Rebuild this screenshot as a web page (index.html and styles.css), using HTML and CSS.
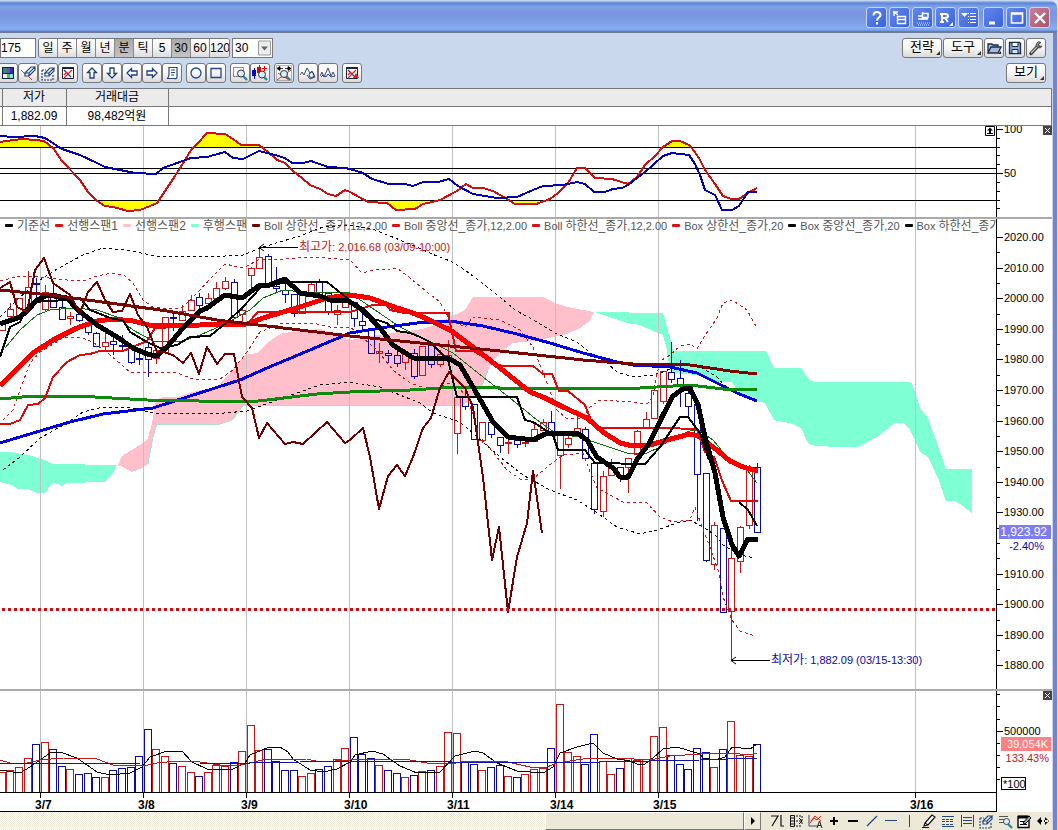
FILE: index.html
```html
<!DOCTYPE html>
<html lang="ko">
<head>
    <meta charset="UTF-8">
    <meta name="viewport" content="width=device-width, initial-scale=1.0">
    <title>종합차트</title>
    <link rel="stylesheet" href="styles.css">
</head>
<body>
    <!-- shared icons -->
    <svg class="defs" aria-hidden="true">
        <symbol id="i-eraser" viewBox="0 0 16 16">
            <path d="M5 8l6-6h4l-6 6zM5 8v3h4l6-6V2M9 8v3" fill="#fff" stroke="#26487f" stroke-width="1.2"/>
        </symbol>
        <symbol id="i-erasebox" viewBox="0 0 16 16">
            <path d="M2 5v10h11V9M2 5h4" fill="none" stroke="#26487f" stroke-width="1.2" stroke-dasharray="2 1"/>
            <path d="M5 8l5-5h4l-5 5zM5 8v3h4l5-5V3M9 8v3" fill="#fff" stroke="#26487f" stroke-width="1.2"/>
        </symbol>
        <symbol id="i-chartx" viewBox="0 0 16 16">
            <path d="M2.500 2.500h11v11h-11z" fill="#fff" stroke="#223" />
            <path d="M2 3h12" stroke="#223" stroke-width="2"/>
            <path d="M4 5l7 7" stroke="#23a" stroke-width="1.200"/>
            <path d="M12 5l-8 8M4 10l3-3" stroke="#d22" stroke-width="1.200"/>
        </symbol>
        <symbol id="i-arrow" viewBox="0 0 16 16">
            <path d="M8 3l4.500 4.500H10V13H6V7.500H3.500z" fill="#fff" stroke="#1f3f7f" stroke-width="1.300"/>
        </symbol>
        <symbol id="i-close" viewBox="0 0 9 9">
            <path d="M0 0h9v9H0z" fill="#444"/>
            <path d="M2 2l5 5M7 2L2 7" stroke="#fff"/>
        </symbol>
    </svg>

    <div class="window">
        <header class="titlebar">
            <div class="title-buttons">
                <button aria-label="도움말"><svg viewBox="0 0 16 16"><path d="M4.500 5.500C4.500 1 11.500 1 11.500 5c0 2.500-3.500 2.500-3.500 5.500M8 12v2.500" fill="none" stroke="#fff" stroke-width="2"/></svg></button>
                <button aria-label="창 연결"><svg viewBox="0 0 16 16"><path d="M5.500 6.500h8v7h-8zM6 9.500h7M2 2l4 3M1 2h5M2 1v5" fill="none" stroke="#fff" stroke-width="1.400"/></svg></button>
                <button aria-label="창 고정"><svg viewBox="0 0 16 16"><path d="M3 6h4M7.500 2v8M8 3.500h5v4H8M3 9h10" fill="none" stroke="#fff" stroke-width="1.500"/><path d="M2 13h13M3 15h12" stroke="#dfe8ff" stroke-dasharray="1 1"/></svg></button>
                <button aria-label="복원"><svg viewBox="0 0 16 16"><path d="M4 12V4h3c4 0 4 4 0 4H4M7 8l3 4M2 4h3M2 12h4" fill="none" stroke="#fff" stroke-width="2"/><path d="M15 12v4h-4z" fill="#fff"/></svg></button>
                <button aria-label="메뉴"><svg viewBox="0 0 16 16"><path d="M0 3h7l-3.500 4z" fill="#fff"/><path d="M7 3.500h8M7 6.500h8M7 9.500h8M7 12.500h8" stroke="#fff" stroke-dasharray="1 1 8 1"/></svg></button>
            </div>
            <div class="title-buttons">
                <button class="sys" aria-label="최소화"><svg viewBox="0 0 16 16"><path d="M3 13h6" stroke="#fff" stroke-width="3"/></svg></button>
                <button class="sys" aria-label="최대화"><svg viewBox="0 0 16 16"><path d="M2.500 3h11v10h-11zM2 4h12" fill="none" stroke="#fff" stroke-width="1.600"/></svg></button>
                <button class="sys close" aria-label="닫기"><svg viewBox="0 0 16 16"><path d="M3 3l10 10M13 3L3 13" stroke="#fff" stroke-width="2.400"/></svg></button>
            </div>
        </header>

        <div class="body">
            <div class="toolbar">
                <div class="row">
                    <input class="field code" type="text" value="175" aria-label="종목 코드">
                    <div class="periods">
                        <button>일</button><button>주</button><button>월</button><button>년</button><button class="on">분</button><button>틱</button><button>5</button><button class="on">30</button><button>60</button><button>120</button>
                    </div>
                    <div class="combo">
                        <select class="field" aria-label="분 간격"><option>30</option><option>60</option></select>
                        <svg class="combo-arrow" viewBox="0 0 13 15"><path d="M.5.5h12v14H.5z" fill="#ececec" stroke="#999"/><path d="M3 6h7l-3.500 4z" fill="#666"/></svg>
                    </div>
                    <div class="right">
                        <button class="btn text menu">전략</button>
                        <button class="btn text menu">도구</button>
                        <button class="btn" aria-label="열기"><svg viewBox="0 0 16 16"><path d="M2 13V4h4l1 1h5v2M2 13l3-6h10l-3 6z" fill="#a8bbdc" stroke="#1c2c4c" stroke-width="1.300"/><path d="M15 11v3h-3z" fill="#222"/></svg></button>
                        <button class="btn" aria-label="저장"><svg viewBox="0 0 16 16"><path d="M2.500 2.500h10l1 1v10h-11z" fill="#8fa8d8" stroke="#1c2c4c" stroke-width="1.300"/><path d="M5 2.500h6v4H5z" fill="#fff" stroke="#1c2c4c"/><path d="M5 9.500h6v4H5z" fill="#dde5f5" stroke="#1c2c4c"/></svg></button>
                        <button class="btn" aria-label="설정"><svg viewBox="0 0 16 16"><path d="M3 13.500L10 6" stroke="#444" stroke-width="3.500" stroke-linecap="round"/><path d="M3 13L9 7" stroke="#bbb" stroke-width="1.200"/><path d="M13 2.500a3 3 0 1 0 1 3.500l-3 .5-.5-2.500z" fill="#999" stroke="#444"/></svg></button>
                    </div>
                </div>

                <div class="row icons">
                    <div class="group cut">
                        <button class="btn" aria-label="색상"><svg viewBox="0 0 16 16"><path d="M2 2h12v12H2z" fill="#123"/><path d="M3 3h4v5H3z" fill="#2a8a8a"/><path d="M7 3h3v5H7z" fill="#a04080"/><path d="M10 3h3v5h-3z" fill="#2038c0"/><path d="M3 9h4v4H3z" fill="#eee"/><path d="M7 9h3v4H7z" fill="#50c050"/><path d="M10 9h3v4h-3z" fill="#90e0f0"/></svg></button>
                        <button class="btn" aria-label="지우개"><svg viewBox="0 0 16 16"><path d="M1 5l4 4M8 11l4 4" fill="none" stroke="#d33"/><use href="#i-eraser"/></svg></button>
                        <button class="btn" aria-label="영역 지우기"><svg><use href="#i-erasebox"/></svg></button>
                        <button class="btn" aria-label="차트 초기화"><svg><use href="#i-chartx"/></svg></button>
                    </div>
                    <div class="group">
                        <button class="btn" aria-label="위"><svg><use href="#i-arrow"/></svg></button>
                        <button class="btn" aria-label="아래"><svg class="down"><use href="#i-arrow"/></svg></button>
                        <button class="btn" aria-label="왼쪽"><svg class="left"><use href="#i-arrow"/></svg></button>
                        <button class="btn" aria-label="오른쪽"><svg class="rightward"><use href="#i-arrow"/></svg></button>
                        <button class="btn" aria-label="메모"><svg viewBox="0 0 16 16"><path d="M5 2.500h8v9c0 3-2 2-3 2H3c2-1 2-2 2-4z" fill="#fff" stroke="#26487f" stroke-width="1.200"/><path d="M7 5h4M7 7.500h4M7 10h3" stroke="#26487f"/></svg></button>
                    </div>
                    <div class="group">
                        <button class="btn" aria-label="원"><svg viewBox="0 0 16 16"><circle cx="8" cy="8" r="5" fill="none" stroke="#26487f" stroke-width="1.300"/></svg></button>
                        <button class="btn" aria-label="사각형"><svg viewBox="0 0 16 16"><path d="M3 3.500h10v9H3z" fill="none" stroke="#26487f" stroke-width="1.300"/></svg></button>
                    </div>
                    <div class="group">
                        <button class="btn" aria-label="영역 확대"><svg viewBox="0 0 16 16"><path d="M1.500 2.500h10v9h-10z" fill="none" stroke="#222" stroke-dasharray="1 1"/><path d="M11 11l4 4" stroke="#2a8a9a" stroke-width="2.400"/><circle cx="9" cy="8.500" r="3.500" fill="#d8eef8" stroke="#333"/></svg></button>
                        <button class="btn" aria-label="봉 확대"><svg viewBox="0 0 16 16"><path d="M0 5h4v6H0zM2 3h1v11H2z" fill="#0000c8"/><path d="M5 2h4v6H5zM7 0h1v10H7zM12 1h1v5h-1zM10 3h5v1h-5z" fill="#d00"/><path d="M12 12l3 3" stroke="#2a8a9a" stroke-width="2.400"/><circle cx="10" cy="9.500" r="3.500" fill="#d8eef8" stroke="#333"/></svg></button>
                    </div>
                    <div class="group">
                        <button class="btn" aria-label="전체 보기"><svg viewBox="0 0 16 16"><path d="M.5.5h15v15H.500z" fill="none" stroke="#777" stroke-dasharray="1 1"/><path d="M1 15L15 5M2 8l11 7" stroke="#d33"/><path d="M3 3.500h4M9 3.500h4M4 1.500v4l-3-2zM12 1.500v4l3-2z" fill="#000" stroke="#000" stroke-width=".8"/><path d="M10 11l4 4" stroke="#2a8a9a" stroke-width="2.400"/><circle cx="8" cy="9" r="3.500" fill="#d8eef8" stroke="#333"/></svg></button>
                    </div>
                    <div class="group">
                        <button class="btn" aria-label="추세 보기"><svg viewBox="0 0 16 16"><path d="M0 10l2-3 2 3 3-7 3 5 2-2 3 6-5 2-3-4" fill="none" stroke="#3a4a6a"/><circle cx="11.500" cy="10" r="2.500" fill="none" stroke="#26487f"/></svg></button>
                        <button class="btn" aria-label="파동 보기"><svg viewBox="0 0 16 16"><path d="M0 11l2-4 2 5 4-9 3 8 2-4 2 4" fill="none" stroke="#3a4a6a"/><path d="M1 12l2-2 3 2 2-3 3 3 4-1" fill="none" stroke="#26487f"/></svg></button>
                    </div>
                    <div class="group">
                        <button class="btn" aria-label="신호 삭제"><svg viewBox="0 0 16 16"><use href="#i-chartx"/><path d="M9 13l3-5 3 5z" fill="#d22"/></svg></button>
                    </div>
                    <div class="right">
                        <button class="btn text menu">보기</button>
                    </div>
                </div>
            </div>

            <table class="quote">
                <tr><th class="edge"></th><th class="low">저가</th><th class="amount">거래대금</th><th></th></tr>
                <tr><td></td><td>1,882.09</td><td>98,482억원</td><td></td></tr>
            </table>

            <main class="chart">
                <section class="pane oscillator">
                    <svg class="plot" id="oscPlot"></svg>
                    <svg class="axis" id="oscAxis"></svg>
                    <button class="mini expand" aria-label="확대"><svg viewBox="0 0 10 10"><path d="M.5.500h9v9h-9z" fill="#fff" stroke="#000"/><path d="M5 1.500l3 3H6V7h2v1H2V7h2V4.500H2z"/></svg></button>
                    <button class="mini" aria-label="지표 닫기"><svg><use href="#i-close"/></svg></button>
                </section>

                <section class="pane price">
                    <svg class="plot" id="pricePlot"></svg>
                    <svg class="axis" id="priceAxis"></svg>
                    <ul class="legend">
                        <li class="black"><span>기준선</span></li>
                        <li class="red"><span>선행스팬1</span></li>
                        <li class="pink"><span>선행스팬2</span></li>
                        <li class="mint"><span>후행스팬</span></li>
                        <li class="maroon"><small>Boll </small>상한선_종가<small>,12,2.00</small></li>
                        <li class="red"><small>Boll </small>중앙선_종가<small>,12,2.00</small></li>
                        <li class="red"><small>Boll </small>하한선_종가<small>,12,2.00</small></li>
                        <li class="red"><small>Box </small>상한선_종가<small>,20</small></li>
                        <li class="black"><small>Box </small>중앙선_종가<small>,20</small></li>
                        <li class="black"><small>Box </small>하한선_종가</li>
                    </ul>
                </section>

                <section class="pane volume">
                    <svg class="plot" id="volPlot"></svg>
                    <svg class="axis" id="volAxis"></svg>
                    <button class="mini" aria-label="거래량 닫기"><svg><use href="#i-close"/></svg></button>
                </section>
            </main>

            <footer class="bottom">
                <div class="scrollbar">
                    <div class="thumb"></div>
                    <button aria-label="오른쪽으로"><svg viewBox="0 0 8 8"><path d="M2 0l4 4-4 4z"/></svg></button>
                </div>
                <div class="draw-tools">
                    <button aria-label="되돌리기"><svg viewBox="0 0 16 16"><path d="M2 3h7L3 13M12 2v11h3" fill="none" stroke="#111" stroke-width="1.200"/></svg></button>
                    <button aria-label="기간"><svg viewBox="0 0 16 16"><path d="M2.500 2.500h4v11h-4zM2 5h4M2 8h4M2 11h4" fill="none" stroke="#111"/><path d="M8 3h6M8 8h5M8 13h6M14 3v8" stroke="#111" stroke-dasharray="2 1"/><path d="M11 5l3 3-3 3" fill="none" stroke="#111"/></svg></button>
                    <button aria-label="자동"><svg viewBox="0 0 16 16"><path d="M2 2v11h8" fill="none" stroke="#334a7a"/><path d="M3 10l4-5 3 2 4-4M4 8l4-5 6 5" fill="none" stroke="#d22"/><path d="M10 15l2.500-7 2.500 7M11 12.500h3" fill="none" stroke="#222"/></svg></button>
                    <button aria-label="늘리기"><svg viewBox="0 0 16 16"><path d="M8 4v8M4 8h8" stroke="#000" stroke-width="2"/></svg></button>
                    <button aria-label="줄이기"><svg viewBox="0 0 16 16"><path d="M3 8h10" stroke="#000" stroke-width="2"/></svg></button>
                    <button aria-label="추세선"><svg viewBox="0 0 16 16"><path d="M3 13L13 3" stroke="#26487f" stroke-width="1.200"/></svg></button>
                    <button aria-label="수평선"><svg viewBox="0 0 16 16"><path d="M2 7.500h12" stroke="#26487f"/></svg></button>
                    <button aria-label="수직선"><svg viewBox="0 0 16 16"><path d="M7.500 2v12" stroke="#26487f"/></svg></button>
                    <button aria-label="펜"><svg viewBox="0 0 16 16"><path d="M4 10l7-8 3 2-7 8-4 1zM4 10l3 2M1 14.500h7" fill="#fff" stroke="#111" stroke-width="1.200"/></svg></button>
                    <button aria-label="격자"><svg viewBox="0 0 16 16"><path d="M2 3.500h12M2 13.500h12" stroke="#26487f"/><path d="M2 6.500h12M2 8.500h12M2 11.500h12" stroke="#26487f" stroke-dasharray="3 1"/></svg></button>
                    <button aria-label="채널"><svg viewBox="0 0 16 16"><path d="M2.500 2v12M14.500 2v12M4 4.500h9M4 7.500h9M4 10.500h9" stroke="#26487f"/></svg></button>
                    <button aria-label="지우기"><svg><use href="#i-erasebox"/></svg></button>
                    <button aria-label="찾기"><svg viewBox="0 0 16 16"><path d="M2 3.500h9M2 6.500h6M2 9.500h5" stroke="#555"/><path d="M11 11l4 4" stroke="#2a8a9a" stroke-width="2.400"/><circle cx="9.500" cy="8.500" r="3" fill="#d8eef8" stroke="#345"/></svg></button>
                    <button aria-label="메모"><svg viewBox="0 0 16 16"><path d="M2 3.500h11v11H2z" fill="#fff" stroke="#000" stroke-width="1.400"/><path d="M2 4h10" stroke="#000" stroke-width="3"/><path d="M4 8.500h6M4 11.500h7" stroke="#000"/><path d="M7 10l6-7 2 2-6 6z" fill="#9ab" stroke="#000"/></svg></button>
                    <button aria-label="좌우 이동"><svg viewBox="0 0 16 16"><path d="M6 4v8L2 8zM10 4v8l4-4zM4 7h3v2H4zM9 7h4v2H9z"/></svg></button>
                </div>
            </footer>
        </div>
    </div>
    <script src="chart.js"></script>
</body>
</html>
```
FILE: styles.css
```css
* {
    box-sizing: border-box;
}

body {
    margin: 0;
    background: #dde2f4;
    font-family: "Liberation Sans", "Noto Sans CJK KR", sans-serif;
    font-size: 12px;
    color: #000;
}

button, input, select {
    font: inherit;
    color: inherit;
    margin: 0;
    padding: 0;
}

button svg {
    display: block;
    width: 16px;
    height: 16px;
}

.defs {
    display: none;
}

.window {
    margin-right: 1px;
}

/* title bar */
.titlebar {
    display: flex;
    justify-content: flex-end;
    gap: 4px;
    height: 33px;
    padding: 6px 7px 0 0;
    border-top: 1px solid #c4d6f2;
    border-bottom: 2px solid #707a92;
    border-radius: 0 7px 0 0;
    background: linear-gradient(#a9c4f0, #5c86d6 2px, #7fa3ea 6px, #7b95df 12px, #7c9ce4 20px, #87aef0 28px, #6f92d8);
}

.title-buttons {
    display: flex;
    gap: 2px;
}

.title-buttons button {
    display: flex;
    align-items: center;
    justify-content: center;
    width: 21px;
    height: 21px;
    border: 1px solid #c3d3fa;
    border-radius: 3px;
    background: linear-gradient(135deg, #6488ec, #3a62dc);
}

.title-buttons .close {
    background: linear-gradient(135deg, #c88098, #a85468);
}

.body {
    padding-right: 1px;
    border-right: 4px solid #7482d2;
    background: #c9d8ed;
}

/* toolbar */
.toolbar {
    padding: 5px 6px 5px 0;
}

.row {
    display: flex;
    align-items: center;
    gap: 2px;
    height: 20px;
}

.row.icons {
    gap: 4px;
    margin-top: 5px;
}

.field {
    height: 20px;
    border: 1px solid #777;
    border-radius: 0;
    background: #fff;
}

.code {
    width: 36px;
}

.periods {
    display: flex;
    border: 1px solid #777;
    border-radius: 3px;
    overflow: hidden;
}

.periods button {
    width: 19px;
    height: 18px;
    border: 0;
    border-right: 1px solid #888;
    background: linear-gradient(#fff, #f4f4f4 50%, #dcdcdc);
    line-height: 16px;
    white-space: nowrap;
}

.periods button:last-child {
    border-right: 0;
}

.periods .on {
    background: linear-gradient(#a8a8a8, #c4c4c4);
}

.combo {
    position: relative;
}

.combo select {
    width: 41px;
    padding-left: 2px;
    appearance: none;
}

.combo-arrow {
    position: absolute;
    top: 2px;
    right: 2px;
    width: 13px;
    height: 16px;
    pointer-events: none;
}

.right {
    display: flex;
    gap: 1px;
    margin-left: auto;
}

.group {
    display: flex;
}

.group.cut {
    margin-left: -2px;
}

.btn {
    display: flex;
    align-items: center;
    justify-content: center;
    width: 20px;
    height: 20px;
    border: 1px solid #777;
    border-radius: 3px;
    background: linear-gradient(#fff, #f6f6f6 50%, #dadada);
}

.btn.text {
    position: relative;
    width: 40px;
    padding-bottom: 2px;
    font-size: 13px;
    line-height: 16px;
}

.btn.menu::after {
    content: "";
    position: absolute;
    right: 1px;
    bottom: 2px;
    border: 2px solid #333;
    border-top-color: transparent;
    border-left-color: transparent;
}

.down {
    transform: rotate(180deg);
}

.left {
    transform: rotate(-90deg);
}

.rightward {
    transform: rotate(90deg);
}

/* quote table */
.quote {
    width: 100%;
    border-collapse: collapse;
    table-layout: fixed;
    background: #fff;
}

.quote th, .quote td {
    height: 18px;
    padding: 0;
    border: 1px solid #777;
    font-weight: normal;
    line-height: 17px;
    text-align: center;
}

.quote td {
    height: 19px;
}

.quote th {
    background: #ebebeb;
}

.quote .edge {
    width: 2px;
}

.quote .low {
    width: 64px;
}

.quote .amount {
    width: 102px;
}

.quote th:first-child, .quote td:first-child {
    border-left: 0;
}

/* chart panes */
.chart {
    background: #fff;
}

.pane {
    position: relative;
    display: flex;
    overflow: hidden;
}

.oscillator {
    height: 93px;
    border-bottom: 2px solid #aaa;
}

.price {
    height: 472px;
    border-bottom: 2px solid #aaa;
}

.volume {
    height: 121px;
}

.plot {
    flex: 1;
    min-width: 0;
    height: 100%;
    border-right: 1px solid #000;
}

.volume .plot {
    border-bottom: 1px solid #000;
}

.axis {
    width: 55px;
    height: 100%;
}

.plot text, .axis text {
    font-size: 11px;
}

.plot .ko, .axis .tag {
    font-size: 12px;
}

.plot .date {
    font-size: 12px;
    font-weight: bold;
}

.plot line, .plot rect, .plot polyline, .plot polygon, .axis line, .axis rect {
    shape-rendering: crispEdges;
}

.plot polyline {
    fill: none;
    stroke-linejoin: round;
}

.mini {
    position: absolute;
    top: 0;
    right: 0;
    border: 0;
    background: none;
}

.mini svg {
    width: 9px;
    height: 9px;
}

.mini.expand {
    right: 57px;
}

.mini.expand svg {
    width: 10px;
    height: 10px;
}

.legend {
    position: absolute;
    top: 0;
    left: 5px;
    right: 56px;
    display: flex;
    gap: 5px;
    margin: 0;
    padding: 0;
    overflow: hidden;
    list-style: none;
    line-height: 14px;
    white-space: pre;
    color: #555;
}

.legend li {
    flex: none;
}

.legend small {
    font-size: 11px;
}

.legend li::before {
    content: "";
    display: inline-block;
    width: 8px;
    height: 3px;
    margin-right: 4px;
    border-radius: 1px;
    vertical-align: 3px;
    background: #000;
}

.legend .red::before {
    background: #e01010;
}

.legend .pink::before {
    background: #ffc0cb;
}

.legend .mint::before {
    background: #7fffd4;
}

.legend .maroon::before {
    background: #700000;
}

/* scroll bar and drawing tools */
.bottom {
    display: flex;
    height: 18px;
    background: #ece9d8;
}

.scrollbar {
    flex: 1;
    display: flex;
    justify-content: flex-end;
    background: repeating-conic-gradient(#fff 0 25%, #ece9d8 0 50%) 0 0 / 2px 2px;
}

.thumb {
    width: 199px;
    border: 1px solid #fff;
    border-right-color: #777;
    border-bottom-color: #777;
    background: #ece9d8;
}

.scrollbar button {
    display: flex;
    align-items: center;
    justify-content: center;
    width: 17px;
    border: 1px solid #fff;
    border-right-color: #777;
    border-bottom-color: #777;
    background: #ece9d8;
}

.scrollbar button svg {
    width: 8px;
    height: 8px;
}

.draw-tools {
    display: flex;
    padding-left: 6px;
}

.draw-tools button {
    width: 19px;
    padding-left: 2px;
    border: 0;
    background: none;
}
```
FILE: chart.js
```js
var NS = "http://www.w3.org/2000/svg";
var RED = "#c01818", BLUE = "#0a0aa0";
var STEP = 103 / 12;          // 12 bars per day
var FIRST = -5;               // bars before 3/7
var days = [["3/7", 40], ["3/8", 143], ["3/9", 246], ["3/10", 349], ["3/11", 452], ["3/14", 555], ["3/15", 658], ["3/16", 915]];

function add(parent, tag, attrs, text) {
    var el = document.createElementNS(NS, tag);
    for (var k in attrs) el.setAttribute(k, attrs[k]);
    if (text) el.textContent = text;
    parent.appendChild(el);
    return el;
}

// all panes share one vertical scale, each one shows its part from "top"
function pane(id, top) {
    return add(document.getElementById(id), "g", { transform: "translate(0," + -top + ")" });
}

function line(g, x1, y1, x2, y2, color, width) {
    return add(g, "line", { x1: x1, y1: y1, x2: x2, y2: y2, stroke: color, "stroke-width": width || 1 });
}

function curve(g, points, color, width, dash) {
    var p = add(g, "polyline", { points: points, stroke: color, "stroke-width": width });
    if (dash) p.setAttribute("stroke-dasharray", dash);
}

function gridDays(g, y1, y2) {
    days.forEach(function (d) { line(g, d[1] + 0.5, y1, d[1] + 0.5, y2, "#c0c0c0"); });
}

function center(i) {
    return Math.round(44.7 + (i + FIRST) * STEP);
}

// ---- oscillator ----
var fast = "0,142 13,140 23,139 35,140 44,141 53,148 62,161 80,180 88,192 97,201 105,206 113,207 128,211 140,210 150,206 157,203 163,194 175,176 182,165 191,150 198,143 207,133 225,134 233,139 241,145 259,145 268,152 277,160 285,163 293,171 302,178 310,185 320,189 328,194 336,196 345,190 350,192 368,202 387,203 396,210 415,209 423,204 432,202 440,200 457,191 466,184 473,188 483,188 493,191 507,199 515,204 536,204 550,199 558,193 568,183 577,168 585,168 595,178 612,179 628,184 637,177 645,165 655,156 663,147 672,141 680,141 689,145 695,152 700,160 705,170 715,184 723,196 731,199 739,199 748,193 757,188";
var slow = "0,136 13,137 35,136 45,138 62,149 80,155 97,163 105,167 115,169 135,173 156,174 163,168 191,158 207,157 225,152 233,158 243,159 259,151 275,155 285,158 292,163 303,163 311,161 328,167 345,168 350,169 363,173 372,179 389,184 405,184 413,186 423,182 438,182 449,179 458,186 473,194 497,198 517,197 533,190 543,186 563,185 577,182 585,184 594,192 605,192 613,189 622,188 628,185 645,172 663,156 672,153 689,155 695,164 700,175 705,190 715,195 722,210 732,210 739,206 748,192 757,192";

var osc = pane("oscPlot", 126);
gridDays(osc, 126, 217);
[["over", 126, 147], ["under", 201, 217]].forEach(function (z) {
    var clip = add(osc, "clipPath", { id: z[0] });
    add(clip, "rect", { x: 0, y: z[1], width: 1000, height: z[2] - z[1] });
    var base = z[0] == "over" ? 147 : 200;
    add(osc, "polygon", { points: fast + " 757," + base + " 0," + base, fill: "#ffff00", "clip-path": "url(#" + z[0] + ")" });
});
[147, 168, 173, 200].forEach(function (y) { line(osc, 0, y + 0.5, "100%", y + 0.5, "#000"); });
curve(osc, fast, "#d01010", 2);
curve(osc, slow, "#0000b8", 2);

// ---- price ----
var price = pane("pricePlot", 219);
add(price, "polygon", { fill: "#7fffd4", points: "0,452 10,452 28,455 37,458 45,460 53,464 117,465 113,473 105,482 67,483 62,486 53,482 45,493 37,493 28,489 18,489 12,485 0,482" });
add(price, "polygon", { fill: "#ffc0cb", points: "118,465 122,456 132,450 143,443 148,438 152,423 155,405 157,399 163,397 177,397 192,392 218,387 222,381 230,373 238,363 245,355 257,353 267,343 277,336 283,333 320,329 335,334 350,340 378,335 407,331 423,329 440,323 448,318 465,310 473,297 543,297 557,304 572,308 594,312 590,320 587,323 580,328 567,334 557,336 540,340 523,342 513,343 502,351 493,360 488,370 483,383 478,392 463,405 243,405 238,413 232,420 220,424 157,424 153,437 150,453 148,464 142,468 132,472 123,467" });
add(price, "polygon", { fill: "#7fffd4", points: "594,312 663,313 670,338 673,351 766,351 774,368 801,368 809,380 815,382 908,382 912,383 920,408 928,418 946,469 972,469 972,513 963,506 955,501 946,501 938,478 928,457 920,452 915,440 910,430 903,423 895,423 877,437 858,447 840,447 815,446 808,443 801,428 793,424 774,420 765,403 757,401 740,395 732,382 717,382 697,375 673,373 668,360 667,350 663,335 653,331 640,325 627,323 610,317" });
curve(price, "148,464 150,453 153,437 157,424 220,424 232,420 238,413 243,405 463,405 478,392 483,383 488,370", "#a8e0cc", 1);
gridDays(price, 219, 689);

// [up/down, high, body top, body bottom, low]
var candles = [
    ["r",323,323,330,330],["r",303,309,316,320],["r",298,298,317,317],["r",271,287,307,310],["b",278,283,284,300],
    ["r",285,292,309,312],["b",283,293,307,308],["b",300,307,319,319],["r",312,316,318,325],["b",313,314,320,322],["b",320,325,332,335],
    ["b",332,333,346,347],["r",328,342,346,350],["b",337,341,344,355],["b",335,345,346,352],["b",346,346,362,364],["b",354,358,359,365],
    ["b",342,347,359,377],["r",350,350,358,364],["r",317,317,352,352],["b",313,317,318,331],["r",305,311,320,320],["r",295,300,310,310],
    ["b",293,297,305,308],["r",293,298,303,305],["r",282,288,298,298],["r",277,281,288,290],["b",279,282,317,318],["r",307,310,314,325],
    ["r",267,268,275,289],["r",248,257,268,268],["b",254,256,285,285],["b",267,286,288,293],["b",283,290,294,303],["b",294,294,313,317],
    ["r",293,293,313,313],["r",281,284,295,295],["b",279,282,295,300],["b",293,293,312,315],["r",305,310,314,325],["r",297,297,307,307],
    ["b",302,302,318,327],["b",314,321,325,330],["b",330,330,353,353],["r",343,351,353,363],["b",350,353,355,363],["b",347,355,363,367],
    ["r",350,352,362,370],["b",349,353,376,379],["r",346,346,375,375],["b",345,345,364,368],["r",350,354,364,367],["r",340,355,360,360],
    ["r",397,397,433,454],["b",388,397,406,410],["b",404,404,439,439],["r",422,422,440,443],["b",422,422,434,438],["b",437,437,445,453],
    ["r",440,442,443,454],["b",437,440,444,448],["r",438,442,443,447],["r",422,429,441,441],["r",419,422,430,430],["b",411,422,431,431],
    ["r",434,434,455,489],["r",435,438,444,448],["r",413,428,433,433],["b",427,429,458,461],["b",463,463,509,514],["r",471,476,511,517],
    ["r",459,466,475,475],["b",467,467,477,482],["r",458,458,467,493],["r",430,431,454,457],["r",412,419,427,427],["r",385,390,418,418],
    ["r",371,371,401,404],["b",342,372,379,383],["b",360,378,386,407],["b",390,393,406,416],["b",404,404,474,521],["b",473,473,560,562],
    ["r",522,525,564,570],["b",528,528,612,612],["r",540,558,611,660],["r",526,527,561,573],["r",465,469,525,529],["b",463,467,532,532]
];
candles.forEach(function (c, i) {
    var x = center(i), color = c[0] == "r" ? RED : BLUE;
    line(price, x + 0.5, c[1], x + 0.5, c[2], color);
    line(price, x + 0.5, c[3], x + 0.5, c[4], color);
    add(price, "rect", { x: x - 2.5, y: c[2] + 0.5, width: 6, height: c[3] - c[2], fill: "none", stroke: color });
});

// bands
curve(price, "0,317 17,300 37,282 57,269 83,255 103,248 127,250 155,256 187,256 207,257 243,255 263,247 300,236 323,227 350,225 375,230 395,238 417,247 432,254 450,261 465,270 482,283 500,297 515,310 537,322 557,334 577,342 593,355 607,363 617,372 633,377 653,375 663,372 672,368 678,365 697,365 717,377 723,384 740,395 757,401", "#000", 1, "3 3");
curve(price, "3,470 20,457 40,438 67,423 83,412 103,407 127,407 153,413 213,414 247,411 277,400 300,392 320,385 350,382 380,387 400,395 420,403 433,413 460,422 483,442 500,457 523,475 550,490 577,500 593,510 617,527 640,534 657,530 677,523 690,520 703,527 715,535 723,545 740,555 755,558", "#000", 1, "3 3");
curve(price, "0,281 20,276 40,277 67,280 83,281 97,276 112,273 125,276 133,283 143,300 153,307 173,309 183,307 197,293 212,277 225,264 243,268 260,259 283,259 313,257 350,260 362,273 377,269 390,270 397,268 410,278 427,292 440,302 450,320 465,327 473,317 500,320 520,330 533,347 547,383 557,410 567,419 583,418 590,407 600,400 633,402 647,404 653,397 657,373 662,360 670,355 680,346 690,344 697,349 702,340 717,318 723,303 732,300 747,310 757,328", RED, 1, "3 3");
curve(price, "3,420 13,410 20,390 30,363 40,352 63,338 80,337 93,342 110,355 130,372 177,373 193,379 220,379 233,370 247,352 260,332 283,323 313,323 330,327 350,327 377,350 393,370 410,383 430,390 453,382 467,397 480,437 493,452 507,470 520,479 533,479 547,467 563,455 583,453 588,467 597,488 623,502 647,503 660,517 673,522 690,520 695,507 702,527 710,547 718,570 723,597 732,620 740,631 755,636", RED, 1, "3 3");

// averages
curve(price, "5,348 20,330 37,315 50,310 73,308 97,310 117,317 133,330 153,341 180,342 200,335 223,325 250,310 263,298 283,290 303,292 323,292 350,293 375,310 400,327 433,343 453,353 483,377 510,398 537,420 557,434 580,437 597,443 627,453 647,453 660,447 673,438 690,431 698,430 713,440 727,457 747,470 757,483", "#107010", 1);
curve(price, "0,443 20,437 40,431 70,422 103,414 153,408 187,397 240,380 267,368 310,350 350,333 387,327 417,323 450,321 483,326 517,334 550,343 583,353 617,362 633,365 670,367 697,373 717,383 737,393 757,401", "#0000e0", 3);
curve(price, "0,399 33,396 77,396 147,400 250,402 317,394 350,392 410,390 457,387 500,388 640,388 690,385 723,389 757,390", "#0c8a0c", 3);
curve(price, "0,424 10,424 20,420 28,405 38,404 45,398 53,377 67,362 80,355 90,354 100,351 123,351 147,341 155,328 247,324 258,312 350,312 373,305 387,305 390,310 405,313 449,313 449,318 456,351 473,351 497,364 502,366 533,366 543,374 552,374 559,391 568,391 585,405 592,423 598,428 663,428 697,429 705,452 714,457 723,483 731,501 758,501", "#e00808", 2);
curve(price, "0,386 33,353 53,340 77,328 97,321 113,319 133,321 153,326 247,324 263,318 283,312 300,307 327,298 350,295 370,298 397,308 410,312 423,317 450,330 473,347 500,368 530,392 543,397 563,407 587,418 603,432 620,443 633,446 650,445 667,440 690,434 698,436 713,447 730,461 743,467 758,471", "#f80000", 5);
curve(price, "0,357 10,327 20,322 25,310 33,302 67,300 80,298 90,310 113,319 123,320 130,332 147,342 160,348 177,345 190,337 210,336 227,322 243,307 262,286 283,283 293,282 327,282 347,298 367,317 387,323 397,331 410,333 420,337 430,342 448,360 457,397 517,397 525,420 533,422 553,435 558,450 585,450 595,463 645,464 660,447 680,417 688,417 700,433 709,460", "#000", 2);
curve(price, "739,502 748,510 757,526", "#000", 2);
curve(price, "0,324 20,317 27,311 37,300 48,295 67,298 78,310 97,325 117,337 133,348 147,354 157,356 167,347 183,328 200,311 207,308 225,295 242,298 260,285 270,285 285,279 300,293 320,296 330,300 347,300 363,310 380,328 393,345 413,358 450,359 460,365 473,387 493,422 508,437 533,440 545,434 577,433 587,440 597,457 613,468 620,477 628,477 638,458 650,442 663,415 673,396 683,389 690,388 698,405 705,437 715,473 723,517 732,545 739,556 748,539 758,540", "#000", 5);
curve(price, "0,290 50,295 117,304 167,311 217,320 250,324 350,336 400,341 450,346 500,351 583,360 633,364 690,365 730,371 757,374", "#780404", 3);
curve(price, "0,288 10,282 17,307 27,312 35,270 44,258 53,283 70,295 80,313 88,292 97,282 105,300 113,312 122,311 130,294 138,315 147,327 157,352 163,352 173,355 183,363 191,353 199,374 207,347 217,364 225,354 234,354 242,397 252,408 259,438 267,423 285,444 293,442 303,444 327,422 345,443 350,440 363,428 370,457 379,509 388,476 397,465 405,476 413,457 423,428 431,418 440,388 449,372 465,388 473,407 483,477 492,560 499,527 508,612 517,557 527,523 533,471 542,533", "#700000", 2);

line(price, 2, 609, "100%", 609, "#c81010", 3).setAttribute("stroke-dasharray", "3 3");

// high and low marks
function mark(x, y, label, rest, color) {
    line(price, x, y + 0.5, x + 39, y + 0.5, "#000");
    add(price, "path", { d: "M" + (x + 5) + " " + (y - 3) + "l-5 3.500 5 3.500", fill: "none", stroke: "#000" });
    var t = add(price, "text", { x: x + 40, y: y + 4, fill: color });
    add(t, "tspan", { "class": "ko" }, label);
    add(t, "tspan", {}, rest);
}
mark(259, 247, "최고가", ": 2,016.68 (03/09-10:00)", RED);
mark(731, 660, "최저가", ": 1,882.09 (03/15-13:30)", BLUE);

// ---- volume ----
var bars = "r772 r770 r767 r758 b744 r742 b749 b766 r769 b774 b773 b777 r777 b770 b768 b767 b756 b729 r749 r756 b763 r766 r772 b776 r772 r765 r766 b762 r751 r725 r750 b749 b761 b770 b770 r776 r773 b769 b766 r759 r748 b737 b754 b758 r765 b770 b773 r777 b775 r771 b770 r766 r732 r733 b761 b764 r770 b767 b765 r776 b777 r774 r769 r768 b748 r704 r752 r756 b764 b734 r761 r774 b768 r758 r760 r759 r736 r727 b755 b764 b769 b748 b752 r767 b749 r721 r755 r756 b744".split(" ");
var vol = pane("volPlot", 691);
gridDays(vol, 691, 792);
bars.forEach(function (b, i) {
    var y = +b.slice(1);
    add(vol, "rect", { x: center(i) - 3.5, y: y + 0.5, width: 7, height: 792 - y, fill: "#fff", stroke: b[0] == "r" ? RED : BLUE });
});
curve(vol, "0,770 20,773 30,767 50,753 60,752 77,758 97,772 110,775 130,773 142,767 150,757 167,751 182,751 192,762 207,769 233,769 245,763 250,755 267,748 280,747 288,752 293,759 310,770 323,772 337,769 350,762 355,755 372,751 383,754 400,766 417,773 440,772 455,756 475,751 483,753 497,763 517,771 543,773 553,767 560,753 577,747 593,743 603,753 617,759 630,761 637,764 645,764 653,758 663,749 677,747 700,754 703,758 715,760 725,757 732,747 750,749 757,744", "#000", 1);
curve(vol, "0,760 10,763 27,763 40,760 63,758 97,759 113,765 143,766 157,763 177,761 200,762 220,765 240,765 263,760 307,759 320,762 350,760 393,759 410,760 427,763 450,764 467,761 503,761 530,767 547,767 557,763 583,759 617,758 650,760 670,756 700,754 730,753 750,755 757,753", RED, 1);
curve(vol, "0,763 60,763 140,764 200,764 300,762 350,761 450,762 600,762 700,760 757,758", "#1010b0", 1);
line(vol, 0, 792.5, "100%", 792.5, "#000");
days.forEach(function (d) {
    line(vol, d[1] + 0.5, 792, d[1] + 0.5, 798, "#000");
    add(vol, "text", { x: d[1] - 5, y: 809, "class": "date" }, d[0]);
});

// ---- axes ----
function tick(g, y, label) {
    line(g, 0, y + 0.5, label ? 6 : 3, y + 0.5, "#000");
    if (label) add(g, "text", { x: 7, y: y + 4 }, label);
}

var a = pane("oscAxis", 126);
[129, 138, 147, 155, 164, 173, 182, 191, 200, 208].forEach(function (y) {
    tick(a, y, y == 129 ? "100" : y == 173 ? "50" : "");
});

a = pane("priceAxis", 219);
for (var p = 2020; p >= 1880; p -= 5) {
    var y = Math.round(237 + (2020 - p) * 3.06);
    tick(a, y, p % 10 || p == 1920 ? "" : p + ".00");
}
add(a, "rect", { x: 2, y: 525, width: 52, height: 14, fill: "#7c7cf4" });
add(a, "text", { x: 50, y: 536, fill: "#fff", "text-anchor": "end", "class": "tag" }, "1,923.92");
add(a, "text", { x: 47, y: 550, fill: BLUE, "text-anchor": "end" }, "-2.40%");

a = pane("volAxis", 691);
[694, 706, 719, 731, 743, 755, 767, 779].forEach(function (y) {
    tick(a, y, y == 731 ? "500000" : "");
});
add(a, "rect", { x: 4, y: 737, width: 50, height: 14, fill: "#ff8080" });
add(a, "text", { x: 51, y: 748, fill: "#fff", "text-anchor": "end" }, "39,054K");
add(a, "text", { x: 52, y: 762, fill: RED, "text-anchor": "end" }, "133.43%");
add(a, "rect", { x: 4.5, y: 777.5, width: 24, height: 12, fill: "#fff", stroke: "#000" });
add(a, "text", { x: 6, y: 788 }, "*100");
```
